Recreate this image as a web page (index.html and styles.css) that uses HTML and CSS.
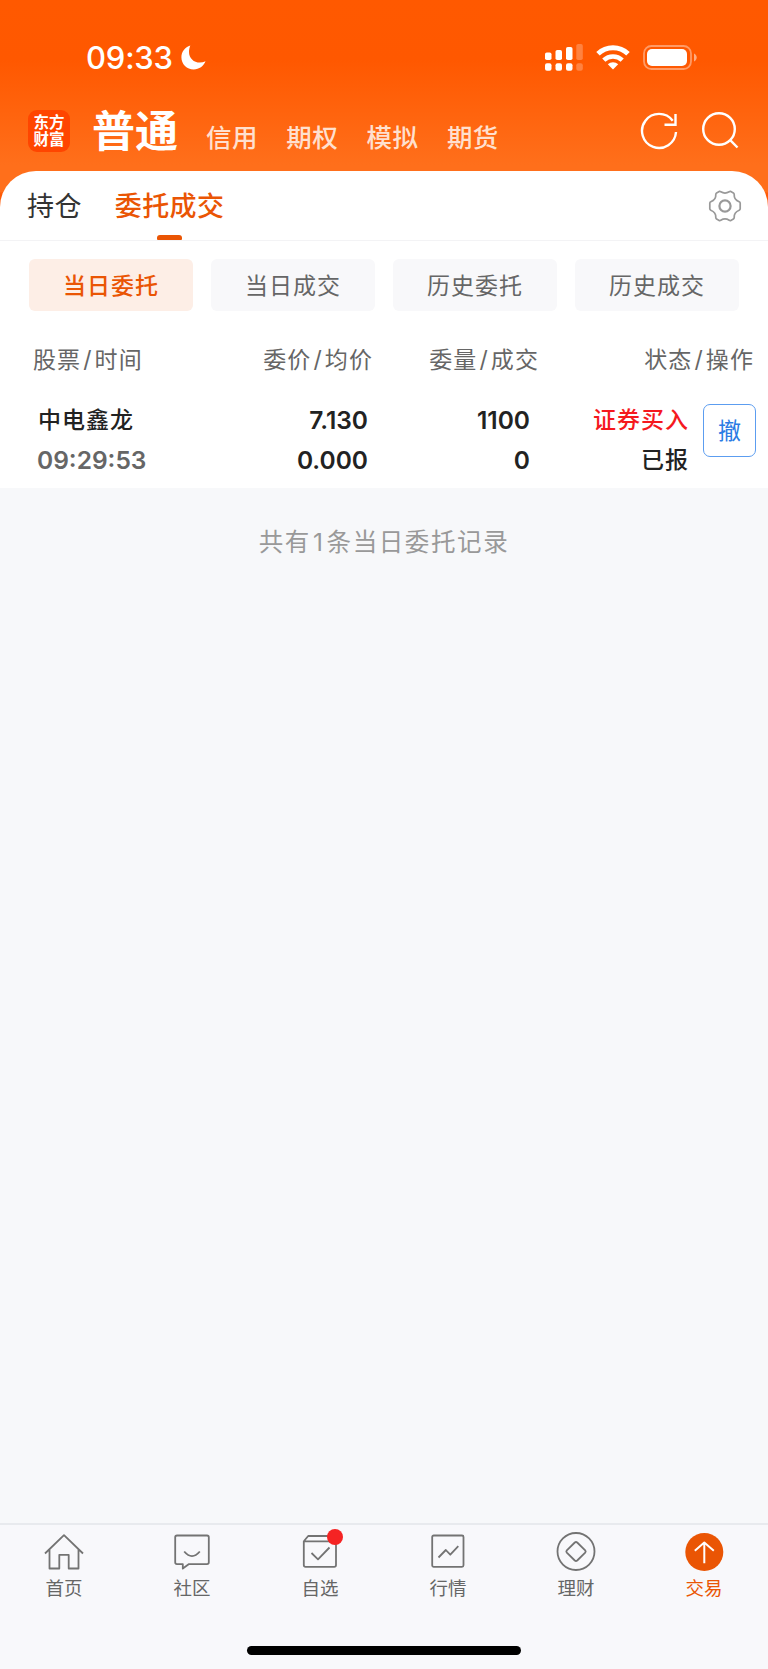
FILE: index.html
```
<!DOCTYPE html>
<html lang="zh-CN">
<head>
<title>委托成交</title>
<meta charset="UTF-8">
<meta name="viewport" content="width=device-width, initial-scale=1.0">
<link rel="stylesheet" href="styles.css">
</head>
<body>
<div class="app">
  <header class="header">
    <div class="status-bar">
      <span class="time">09:33</span>
      <svg class="moon" width="25" height="25" viewBox="0 0 25 25"><path d="M9.300 0.400C4 2 0.400 6.700 0.400 12.200c0 6.800 5.500 12.300 12.300 12.300 5.400 0 10-3.400 11.800-8.200-1.800 0.900-3.700 1.300-5.600 1.300C12.800 17.600 8 12.900 8 6.900c0-2.200 0.500-4.500 1.300-6.500z" fill="#fff"/></svg>
      <div class="status-icons">
        <svg width="38" height="27" viewBox="0 0 38 27" fill="#fff">
          <rect x="0" y="8.500" width="6.500" height="7.500" rx="1.800"/>
          <rect x="10.500" y="6" width="6.500" height="10" rx="1.800"/>
          <rect x="21" y="3" width="6.500" height="13" rx="1.800"/>
          <rect x="31.300" y="0" width="6.500" height="16" rx="1.800" opacity=".25"/>
          <rect x="0" y="19.200" width="6.500" height="7.500" rx="2"/>
          <rect x="10.500" y="19.200" width="6.500" height="7.500" rx="2"/>
          <rect x="21" y="19.200" width="6.500" height="7.500" rx="2"/>
          <rect x="31.300" y="19.200" width="6.500" height="7.500" rx="2" opacity=".25"/>
        </svg>
        <svg class="wifi" width="34" height="25" viewBox="0 0 34 25" fill="none" stroke="#fff" stroke-width="5">
          <path d="M2 8.800a21.800 21.800 0 0 1 30 0"/>
          <path d="M7.800 15.200a13.400 13.400 0 0 1 18.400 0" stroke-width="4.600"/>
          <path d="M17 24.500l-5.200-5.200a7.500 7.500 0 0 1 10.400 0z" fill="#fff" stroke="none"/>
        </svg>
        <svg class="battery" width="54" height="25" viewBox="0 0 54 25">
          <rect x="1" y="1" width="47" height="23" rx="7.500" fill="none" stroke="#fff" stroke-width="1.800" opacity=".4"/>
          <rect x="4" y="4" width="40" height="17" rx="5" fill="#fff"/>
          <path d="M51 8.500c3.600 1.400 3.600 6.600 0 8z" fill="#fff" opacity=".5"/>
        </svg>
      </div>
    </div>
    <div class="nav">
      <div class="logo"><span>东方</span><span>财富</span></div>
      <h1>普通</h1>
      <a>信用</a>
      <a>期权</a>
      <a>模拟</a>
      <a>期货</a>
      <div class="nav-icons">
        <svg width="38" height="38" viewBox="0 0 38 38" fill="none" stroke="#fff" stroke-width="2.400">
          <path d="M36 20a17 17 0 1 1-3.300-11.200"/>
          <path d="M35.500 2v10.800H24.500"/>
        </svg>
        <svg width="38" height="38" viewBox="0 0 38 38" fill="none" stroke="#fff" stroke-width="2.400">
          <circle cx="18" cy="17" r="15.800"/>
          <path d="M29.200 28.200l7.300 7.300"/>
        </svg>
      </div>
    </div>
  </header>

  <main class="panel">
    <div class="tabs">
      <div class="tab">持仓</div>
      <div class="tab active">委托成交</div>
      <svg class="settings" width="34" height="34" viewBox="0 0 34 34" fill="none" stroke="#999">
        <path stroke-width="1.700" stroke-linejoin="round" d="M11.200 2.400Q12.200 2.200 12.800 2.800Q17 5.400 21.200 2.800Q21.800 2.200 22.800 2.400L25.400 3.900Q26.200 4.500 26.200 5.500Q25.900 10.700 31.200 12.800Q32.200 13.200 32.200 14.200V19.800Q32.200 20.800 31.200 21.200Q25.900 23.300 26.200 28.500Q26.200 29.500 25.400 30.100L22.800 31.600Q21.800 31.800 21.200 31.200Q17 28.600 12.800 31.200Q12.200 31.800 11.200 31.600L8.600 30.100Q7.800 29.500 7.800 28.500Q8.100 23.300 2.800 21.200Q1.800 20.800 1.800 19.800V14.200Q1.800 13.200 2.800 12.800Q8.100 10.700 7.800 5.500Q7.800 4.500 8.600 3.900Z"/>
        <circle cx="17" cy="17" r="5.600" stroke-width="2.200"/>
      </svg>
    </div>

    <div class="filters">
      <button class="filter active">当日委托</button>
      <button class="filter">当日成交</button>
      <button class="filter">历史委托</button>
      <button class="filter">历史成交</button>
    </div>

    <div class="row table-head">
      <span>股票<i>/</i>时间</span>
      <span>委价<i>/</i>均价</span>
      <span>委量<i>/</i>成交</span>
      <span>状态<i>/</i>操作</span>
    </div>

    <div class="row order">
      <div class="cell">
        <span class="cjk">中电鑫龙</span>
        <span class="order-time">09:29:53</span>
      </div>
      <div class="cell"><span>7.130</span><span>0.000</span></div>
      <div class="cell"><span>1100</span><span>0</span></div>
      <div class="cell"><span class="cjk buy">证券买入</span><span class="cjk">已报</span></div>
      <button class="cancel">撤</button>
    </div>
  </main>

  <p class="summary">共有<span>1</span>条当日委托记录</p>

  <footer class="footer">
    <nav class="tab-bar">
      <a class="item">
        <svg width="40" height="40" viewBox="0 0 40 40"><path d="M1 21.500L20 3.200l19 18.300M5.500 17.500v19h9.800V22.800h9.400v13.700h9.800v-19"/></svg>
        首页
      </a>
      <a class="item">
        <svg width="40" height="40" viewBox="0 0 40 40"><path d="M5 3.500h30q1.800 0 1.800 1.800v25q0 1.800-1.800 1.800H17l-6.200 4.500v-4.500H5q-1.800 0-1.800-1.800v-25q0-1.800 1.800-1.800zM12.200 19.500q7.800 9.200 15.600 0"/></svg>
        社区
      </a>
      <a class="item">
        <svg width="40" height="40" viewBox="0 0 40 40"><path d="M3.800 9.300h32.200v23.700q0 1.800-1.800 1.800H5.600q-1.800 0-1.800-1.800zL8.200 4h23.600L36 9.300M11.500 21l6.500 6.300 11.500-11.800"/></svg>
        <span class="badge"></span>
        自选
      </a>
      <a class="item">
        <svg width="40" height="40" viewBox="0 0 40 40"><rect x="4.200" y="3.500" width="31.300" height="31.300" rx="1.500"/><path d="M10.500 25.500l7.300-7.500 4.500 4.700 8-8.500"/></svg>
        行情
      </a>
      <a class="item">
        <svg width="40" height="40" viewBox="0 0 40 40"><circle cx="20" cy="19.500" r="18.500"/><path d="M18.800 10.500q1.200-1 2.400 0l8 7.800q1 1.200 0 2.400l-8 7.800q-1.200 1-2.400 0l-8-7.800q-1-1.200 0-2.400z"/></svg>
        理财
      </a>
      <a class="item active">
        <svg width="40" height="40" viewBox="0 0 40 40"><circle class="disc" cx="20.300" cy="20" r="19"/><path d="M20.300 31.200V10.500M10.800 18.700l9.500-8.200 9.500 8.200"/></svg>
        交易
      </a>
    </nav>
    <div class="home-indicator"></div>
  </footer>
</div>
</body>
</html>
```
FILE: styles.css
```
* {
  box-sizing: border-box;
}
body {
  margin: 0;
  background-color: #f7f8fa;
  font-family: Inter, "Noto Sans CJK SC", sans-serif;
}
.app {
  display: flex;
  flex-direction: column;
  height: 1669px;
}
button {
  font-family: inherit;
  border: none;
  padding: 0;
}

/* header */
.header {
  height: 207px;
  background: linear-gradient(#ff5900 0, #ff5800 60px, #ff6f1b 165px, #ff6f1b 192px, #ff5a06 193px);
}
.status-bar {
  display: flex;
  align-items: center;
  height: 104px;
  padding: 11px 71px 0 86px;
}
.time {
  width: 95px;
  color: #fff;
  font-size: 31px;
  font-weight: 500;
  letter-spacing: -0.2px;
}
.status-icons {
  display: flex;
  align-items: center;
  margin-left: auto;
}
.wifi {
  margin-left: 13px;
}
.battery {
  margin-left: 13px;
}
.nav {
  display: flex;
  align-items: center;
  height: 54px;
  padding: 0 29px 0 28px;
}
.logo {
  display: flex;
  flex-direction: column;
  align-items: center;
  justify-content: center;
  width: 42px;
  height: 42px;
  background-color: #ff4500;
  border-radius: 9px;
  color: #fff;
  font-size: 15.5px;
  font-weight: 700;
  line-height: 17px;
}
.nav h1 {
  margin: 0 28px 0 22px;
  color: #fff;
  font-size: 43px;
  font-weight: 600;
  line-height: 54px;
}
.nav a {
  width: 80.3px;
  padding-top: 14px;
  color: #ffe0cf;
  font-size: 25.5px;
  font-weight: 500;
  line-height: 36px;
  letter-spacing: 0.4px;
}
.nav-icons {
  display: flex;
  gap: 23px;
  margin-left: auto;
}

/* white panel */
.panel {
  margin-top: -36px;
  height: 317px;
  background-color: #fff;
  border-radius: 36px 36px 0 0;
}
.tabs {
  display: flex;
  align-items: center;
  height: 70px;
  padding: 0 26px 0 27px;
  border-bottom: 1px solid #f3f3f5;
}
.tab {
  position: relative;
  margin-right: 33px;
  padding-top: 3px;
  color: #333;
  font-size: 27px;
  line-height: 66px;
  letter-spacing: 0.4px;
}
.tab.active {
  color: #ea5504;
  font-weight: 500;
}
.tab.active::after {
  content: "";
  position: absolute;
  left: 42px;
  bottom: 0;
  width: 25px;
  height: 5px;
  background-color: #ea5504;
  border-radius: 3px 3px 1px 1px;
}
.settings {
  margin-left: auto;
}
.filters {
  display: grid;
  grid-template-columns: repeat(4, 164px);
  gap: 18px;
  padding: 18px 29px 0;
}
.filter {
  height: 52px;
  padding-bottom: 2px;
  background-color: #f8f8fa;
  border-radius: 6px;
  color: #666;
  font-size: 23px;
  letter-spacing: 1px;
}
.filter.active {
  background-color: #fdeee6;
  color: #ea5504;
  font-weight: 500;
}
.row {
  display: grid;
}
.table-head {
  grid-template-columns: 126px 214px 166px 215px;
  height: 84px;
  padding: 10px 0 0 33px;
  align-items: center;
  justify-items: end;
  color: #666;
  font-size: 23px;
  letter-spacing: 1.1px;
  white-space: nowrap;
}
.table-head span:first-child {
  justify-self: start;
}
.table-head i {
  margin: 0 2px;
  font-style: normal;
}
.order {
  grid-template-columns: 130px 200px 162px 159px 53px;
  padding-left: 38px;
}
.cell {
  display: flex;
  flex-direction: column;
  align-items: flex-end;
  padding-top: 5px;
  color: #222;
  font-size: 24.5px;
  font-weight: 600;
  line-height: 40px;
  white-space: nowrap;
}
.cell:first-child {
  align-items: flex-start;
}
.cjk {
  font-size: 23px;
  font-weight: 500;
  letter-spacing: 1px;
}
.cell .order-time {
  margin-left: -1px;
  color: #666;
}
.cell .buy {
  color: #f5191e;
}
.cancel {
  width: 53px;
  height: 53px;
  margin: 9px 0 0 14px;
  padding-bottom: 3px;
  background-color: #fff;
  border: 1px solid #5c9df0;
  border-radius: 7px;
  color: #2a7be4;
  font-size: 23px;
}
.summary {
  margin: 36px 0 0;
  color: #999;
  font-size: 24.5px;
  letter-spacing: 1.6px;
  line-height: 36px;
  text-align: center;
}
.summary span {
  margin: 0 2px;
}

/* bottom tab bar */
.footer {
  height: 146px;
  margin-top: auto;
  background-color: #f8f8fb;
  border-top: 2px solid #e8eaee;
}
.tab-bar {
  display: grid;
  grid-template-columns: repeat(6, 128px);
  height: 121px;
}
.item {
  position: relative;
  display: flex;
  flex-direction: column;
  align-items: center;
  padding-top: 7px;
  color: #666;
  font-size: 18.5px;
  line-height: 33px;
}
.item svg {
  fill: none;
  stroke: #737373;
  stroke-width: 1.8;
  stroke-linejoin: round;
}
.item.active {
  color: #ea5504;
}
.item.active svg {
  stroke: #fff;
  stroke-width: 2;
}
.item .disc {
  fill: #ea5504;
  stroke: none;
}
.badge {
  position: absolute;
  top: 4px;
  left: 71px;
  width: 16px;
  height: 16px;
  background-color: #f52323;
  border-radius: 50%;
}
.home-indicator {
  width: 274px;
  height: 9px;
  margin: 0 auto;
  background-color: #000;
  border-radius: 5px;
}
```
